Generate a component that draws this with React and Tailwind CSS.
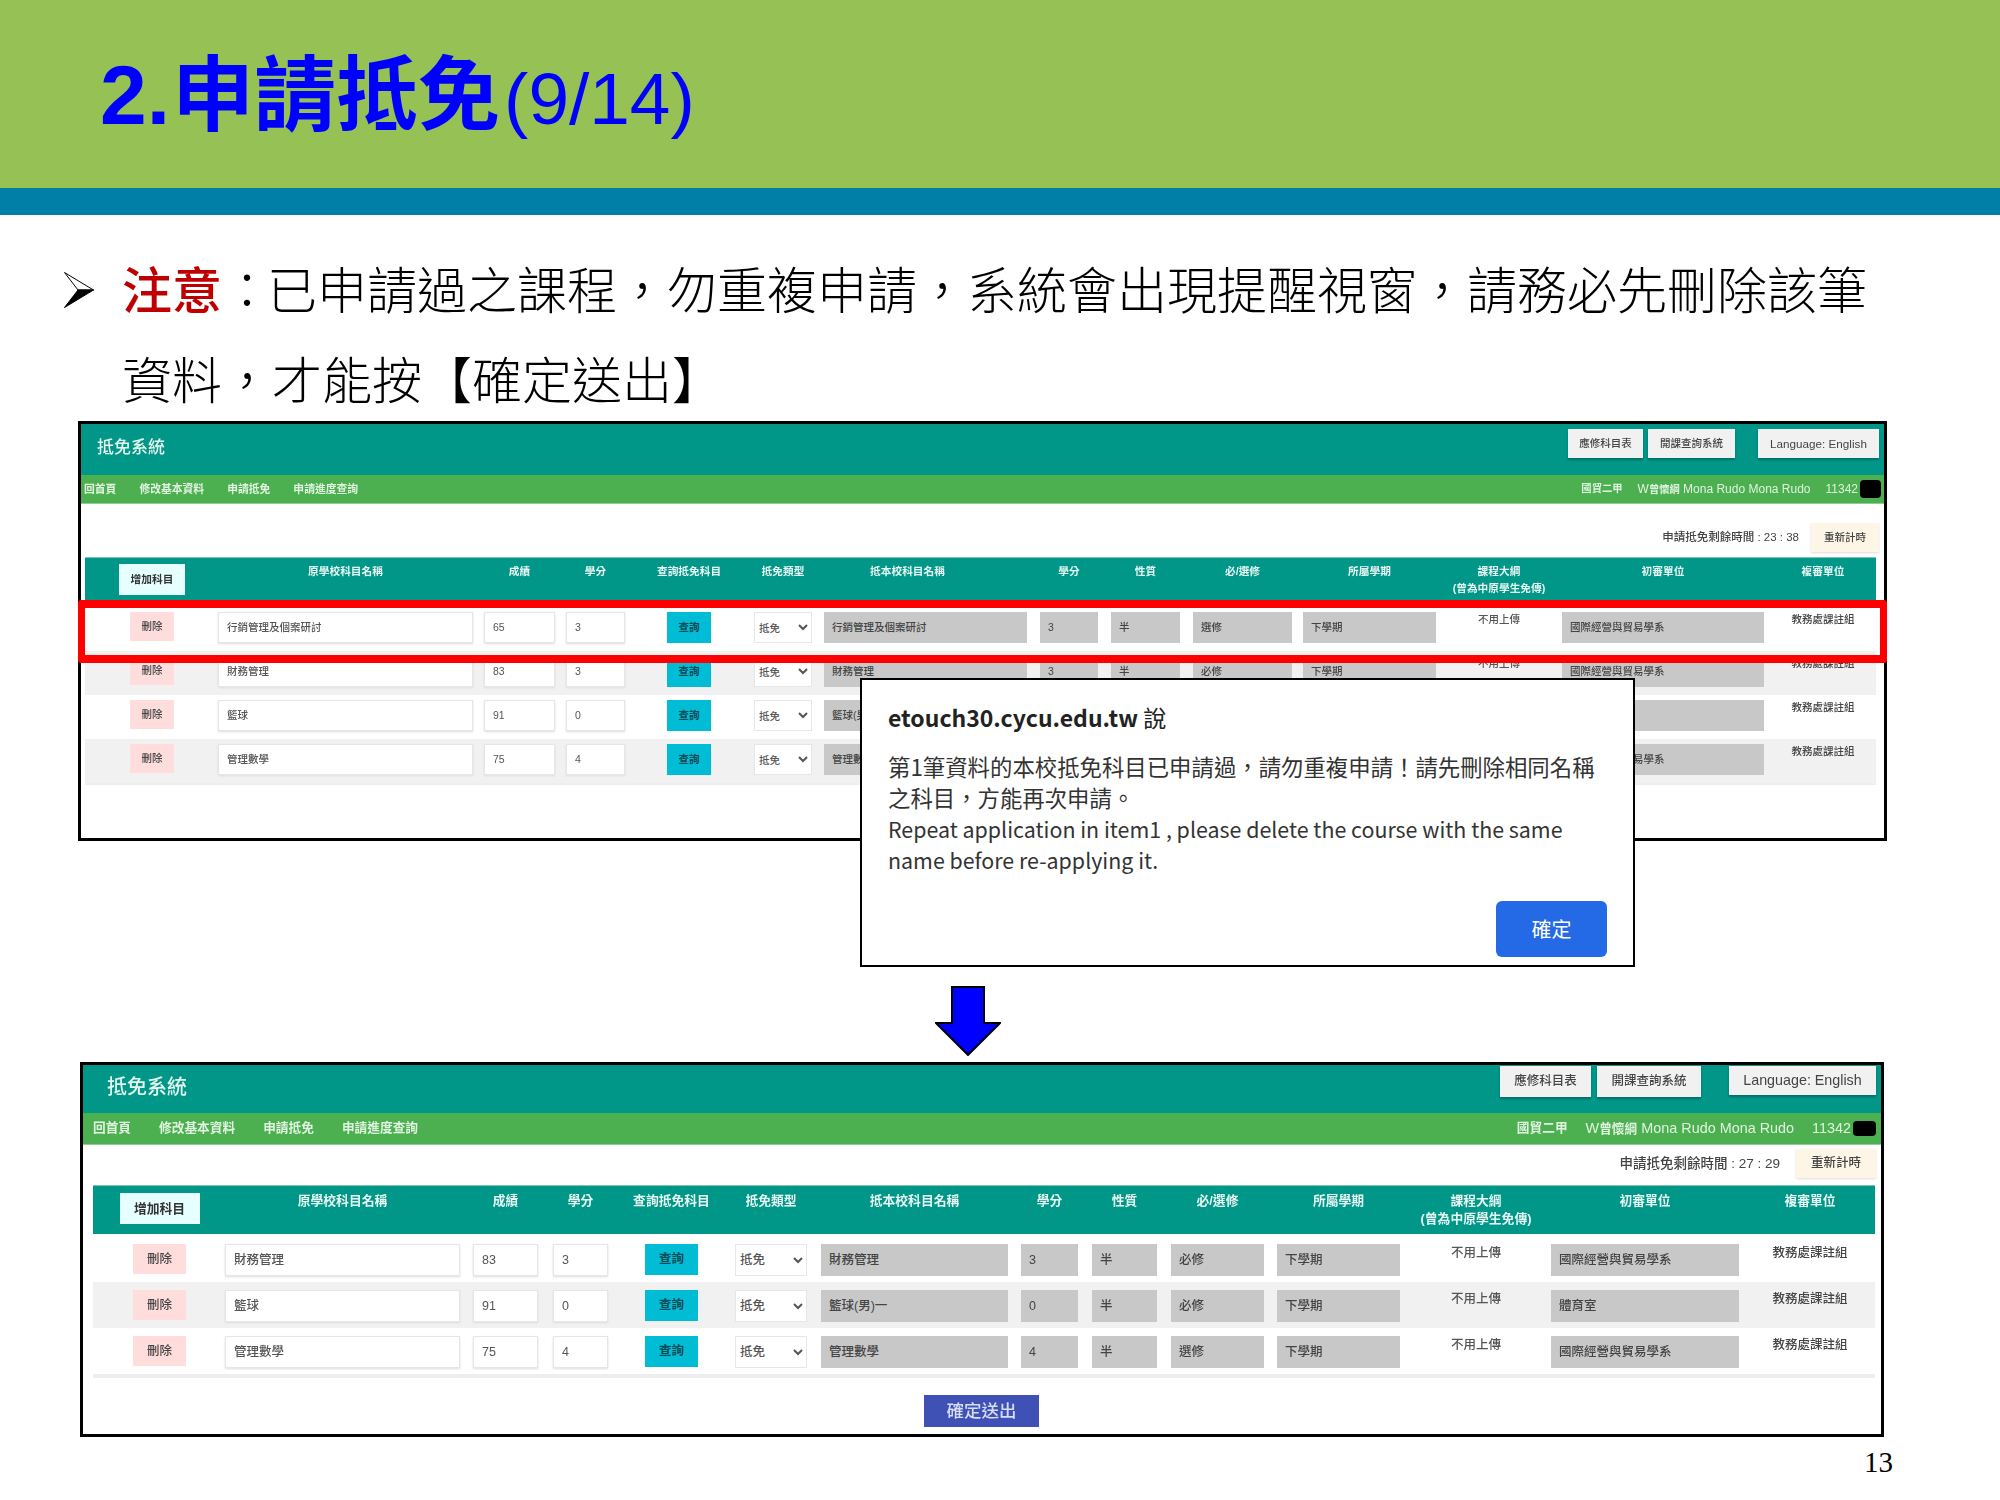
import React from "react";

const CJK = "font-['Noto_Sans_CJK_TC','Liberation_Sans',sans-serif]";
const SHOT_FONT = "font-['Liberation_Sans','Noto_Sans_CJK_TC',sans-serif]";

const HEAD_LABELS = [
  "",
  "原學校科目名稱",
  "成績",
  "學分",
  "查詢抵免科目",
  "抵免類型",
  "抵本校科目名稱",
  "學分",
  "性質",
  "必/選修",
  "所屬學期",
  "課程大綱",
  "初審單位",
  "複審單位",
];

const DEPT = "國際經營與貿易學系";

const rowsTop = [
  { name: "行銷管理及個案研討", score: "65", credit: "3", kind: "選修", dept: DEPT, target: "行銷管理及個案研討" },
  { name: "財務管理", score: "83", credit: "3", kind: "必修", dept: DEPT, target: "財務管理" },
  { name: "籃球", score: "91", credit: "0", kind: "必修", dept: "體育室", target: "籃球(男)一" },
  { name: "管理數學", score: "75", credit: "4", kind: "選修", dept: DEPT, target: "管理數學" },
];

const shotTop = {
  outer: "w-[1809px] h-[420px]",
  bar: "h-[51px]",
  title: "pl-4 text-[17px] -mt-1",
  topBtns: "pt-[5px] pr-[5px]",
  btnH: "h-[29px] text-[10.5px]",
  btnA: "w-[75px]",
  btnB: "w-[87px] ml-[5px]",
  btnC: "w-[121px] ml-[23px] text-[11.7px]",
  nav: "h-[29px] text-[10.8px] pl-[3px] pr-[3px]",
  navGap: "gap-[23px]",
  navRight: "gap-[15px] text-[12px]",
  navCjk: "text-[10.3px]",
  blob: "w-[21px] h-[18px] ml-[2px]",
  timerRow: "h-[53px] pt-[19px] pr-[5px] text-[11.5px]",
  timerGap: "mr-3",
  reset: "w-[68px] h-[29px] text-[10.5px]",
  timer: "申請抵免剩餘時間 : 23 : 38",
  table: "ml-1 w-[1791px]",
  head: "h-[43px] text-[10.7px] leading-[17px]",
  headPad: "pt-[5px]",
  addBtn: "w-[66px] h-[31px] mt-[6px]",
  body: "pt-[7px] border-b-2",
  row: "h-[44px] pt-[5px] text-[10.5px]",
  field: "h-[31px]",
  del: "h-[29px]",
  query: "h-[31px]",
  note: "-mt-[3px]",
  targetHead: "pr-9",
  cols: [
    "ml-[45px] w-[44px]",
    "ml-[44px] w-[255px]",
    "ml-[11px] w-[71px]",
    "ml-[11px] w-[59px]",
    "ml-[42px] w-[44px]",
    "ml-[43px] w-[58px]",
    "ml-[12px] w-[203px]",
    "ml-[13px] w-[58px]",
    "ml-[13px] w-[69px]",
    "ml-[13px] w-[99px]",
    "ml-[11px] w-[133px]",
    "ml-[9px] w-[108px]",
    "ml-[9px] w-[202px]",
    "ml-[16px] w-[86px]",
  ],
  rows: rowsTop,
};

const shotBottom = {
  outer: "w-[1804px] h-[375px]",
  bar: "h-[48px]",
  title: "pl-6 text-[20px] -mt-1",
  topBtns: "pt-px pr-[5px]",
  btnH: "h-[31px] text-[12.5px]",
  btnA: "w-[91px]",
  btnB: "w-[104px] ml-[6px]",
  btnC: "w-[147px] ml-[28px] text-[14.3px]",
  nav: "h-[32px] text-[12.7px] pl-[10px] pr-[5px]",
  navGap: "gap-[28px]",
  navRight: "gap-[18px] text-[14.4px]",
  navCjk: "text-[12.7px]",
  blob: "w-[23px] h-[15px] ml-[2px]",
  timerRow: "h-[40px] pt-1 pr-[5px] text-[13.5px]",
  timerGap: "mr-4",
  reset: "w-[80px] h-[29px] text-[12.5px]",
  timer: "申請抵免剩餘時間 : 27 : 29",
  table: "ml-[10px] w-[1782px]",
  head: "h-[49px] text-[12.8px] leading-[18px]",
  headPad: "pt-[6px]",
  addBtn: "w-[80px] h-[31px] mt-[7px]",
  body: "pt-[2px] border-b-4",
  row: "h-[46px] pt-2 text-[12.5px]",
  field: "h-[32px]",
  del: "h-[30px]",
  query: "h-[31px]",
  note: "-mt-px",
  targetHead: "",
  cols: [
    "ml-[40px] w-[53px]",
    "ml-[39px] w-[235px]",
    "ml-[13px] w-[65px]",
    "ml-[15px] w-[55px]",
    "ml-[37px] w-[53px]",
    "ml-[37px] w-[72px]",
    "ml-[14px] w-[187px]",
    "ml-[13px] w-[57px]",
    "ml-[14px] w-[65px]",
    "ml-[14px] w-[93px]",
    "ml-[13px] w-[123px]",
    "ml-[20px] w-[112px]",
    "ml-[19px] w-[188px]",
    "ml-[26px] w-[90px]",
  ],
  rows: rowsTop.slice(1),
};

const Field = ({ children, className }) => (
  <div className={`flex items-center px-2 overflow-hidden whitespace-nowrap ${className}`}>{children}</div>
);

const Row = ({ shot, item, index }) => {
  const c = shot.cols;
  const fieldInput = `${shot.field} bg-white border border-[#e6e6e6] shadow-[0_1px_2px_#ddd] text-[#555] font-medium`;
  const fieldGray = `${shot.field} bg-[#c8c8c8] text-[#444] font-medium`;
  return (
    <div className={`flex items-start ${shot.row} ${index % 2 === 1 ? "bg-[#f1f1f1]" : "bg-white"}`}>
      <button className={`shrink-0 ${c[0]} ${shot.del} bg-[#ffdddd] text-[#444] font-medium`}>刪除</button>
      <Field className={`shrink-0 ${c[1]} ${fieldInput}`}>{item.name}</Field>
      <Field className={`shrink-0 ${c[2]} ${fieldInput}`}>{item.score}</Field>
      <Field className={`shrink-0 ${c[3]} ${fieldInput}`}>{item.credit}</Field>
      <button className={`shrink-0 ${c[4]} ${shot.query} bg-[#00bcd4] text-[#0a4a58] font-bold`}>查詢</button>
      <select
        defaultValue="抵免"
        className={`shrink-0 ${c[5]} ${shot.field} bg-white border border-[#e6e6e6] text-[#555] font-medium`}
      >
        <option>抵免</option>
      </select>
      <Field className={`shrink-0 ${c[6]} ${fieldGray}`}>{item.target}</Field>
      <Field className={`shrink-0 ${c[7]} ${fieldGray}`}>{item.credit}</Field>
      <Field className={`shrink-0 ${c[8]} ${fieldGray}`}>半</Field>
      <Field className={`shrink-0 ${c[9]} ${fieldGray}`}>{item.kind}</Field>
      <Field className={`shrink-0 ${c[10]} ${fieldGray}`}>下學期</Field>
      <div className={`shrink-0 ${c[11]} ${shot.note} text-center text-[#555] font-medium leading-[20px]`}>不用上傳</div>
      <Field className={`shrink-0 ${c[12]} ${fieldGray}`}>{item.dept}</Field>
      <div className={`shrink-0 ${c[13]} ${shot.note} text-center text-[#444] font-medium whitespace-nowrap leading-[20px]`}>教務處課註組</div>
    </div>
  );
};

const Shot = ({ shot, footer }) => (
  <div className={`border-[3px] border-black bg-white overflow-hidden ${shot.outer}`}>
    <div className={`blur-[0.5px] ${SHOT_FONT}`}>
      {/* top bar */}
      <div className={`flex justify-between bg-[#009688] ${shot.bar}`}>
        <div className={`self-center text-[#e4f5ee] font-medium ${shot.title}`}>抵免系統</div>
        <div className={`flex items-start ${shot.topBtns}`}>
          <button className={`${shot.btnH} ${shot.btnA} bg-[#f1f1f1] text-[#444] font-medium shadow-[0_2px_2px_rgba(0,0,0,.25)]`}>應修科目表</button>
          <button className={`${shot.btnH} ${shot.btnB} bg-[#f1f1f1] text-[#444] font-medium shadow-[0_2px_2px_rgba(0,0,0,.25)]`}>開課查詢系統</button>
          <button className={`${shot.btnC} h-[29px] bg-[#f1f1f1] text-[#444] shadow-[0_2px_2px_rgba(0,0,0,.25)]`}>Language: English</button>
        </div>
      </div>
      {/* nav */}
      <div className={`flex items-center justify-between bg-[#4caf50] text-[#e0f3e0] font-bold border-b border-[#8bcf8e] ${shot.nav}`}>
        <div className={`flex ${shot.navGap}`}>
          <span>回首頁</span>
          <span>修改基本資料</span>
          <span>申請抵免</span>
          <span>申請進度查詢</span>
        </div>
        <div className={`flex items-center font-normal ${shot.navRight}`}>
          <span className={`font-bold ${shot.navCjk}`}>國貿二甲</span>
          <span>W<span className={`font-bold ${shot.navCjk}`}>曾懷綱</span> Mona Rudo Mona Rudo</span>
          <span className="flex items-center">
            11342
            <span className={`inline-block bg-black rounded ${shot.blob}`} />
          </span>
        </div>
      </div>
      {/* timer */}
      <div className={`flex justify-end items-start text-[#444] font-medium ${shot.timerRow}`}>
        <span className={`self-center -mt-[5px] ${shot.timerGap}`}>{shot.timer}</span>
        <button className={`${shot.reset} bg-[#fdf5e6] text-[#444] font-medium shadow-[0_1px_2px_#ddd]`}>重新計時</button>
      </div>
      {/* table */}
      <div className={shot.table}>
        <div className={`flex items-start bg-[#009688] border-t border-[#7fc4bb] text-[#e6f6f2] font-bold ${shot.head}`}>
          <div className={`shrink-0 flex justify-center ${shot.cols[0]}`}>
            <button className={`shrink-0 ${shot.addBtn} bg-[#e6ffff] text-[#333] font-bold`}>增加科目</button>
          </div>
          {HEAD_LABELS.slice(1).map((label, i) => (
            <div
              key={i}
              className={`shrink-0 flex justify-center text-center whitespace-nowrap ${shot.headPad} ${shot.cols[i + 1]} ${i === 5 ? shot.targetHead : ""}`}
            >
              <div className="shrink-0">
                {label}
                {i === 10 && (
                  <>
                    <br />
                    (曾為中原學生免傳)
                  </>
                )}
              </div>
            </div>
          ))}
        </div>
        <div className={`${shot.body} border-[#eeeeee]`}>
          {shot.rows.map((item, i) => (
            <Row key={i} shot={shot} item={item} index={i} />
          ))}
        </div>
      </div>
      {footer}
    </div>
  </div>
);

const AlertBox = () => (
  <div className={`absolute left-[782px] top-[257px] w-[775px] h-[289px] border-2 border-black bg-white px-[26px] pt-[21px] ${CJK}`}>
    <div className="text-[23px] leading-[32px] font-bold text-[#222]">
      etouch30.cycu.edu.tw <span className="font-normal">說</span>
    </div>
    <div className="mt-[18px] text-[22.4px] leading-[31px] text-[#333] whitespace-nowrap">
      第1筆資料的本校抵免科目已申請過，請勿重複申請！請先刪除相同名稱
      <br />
      之科目，方能再次申請。
      <br />
      <span className="text-[21.4px]">Repeat application in item1 , please delete the course with the same</span>
      <br />
      <span className="text-[21.4px]">name before re-applying it.</span>
    </div>
    <div className="mt-[26px] flex justify-end">
      <button className="w-[111px] h-[56px] rounded-md bg-[#2469e5] text-white text-[20px]">確定</button>
    </div>
  </div>
);

const App = () => (
  <div className="w-[2000px] h-[1500px] bg-white overflow-hidden">
    {/* slide header */}
    <div className="h-[188px] bg-[#95c155] pl-[100px] pt-[39px]">
      <div className={`flex items-baseline text-[#0000ff] leading-[100px] ${CJK}`}>
        <span className="text-[84px] font-bold font-['Liberation_Sans',sans-serif]">2.</span>
        <span className="ml-[2px] text-[82px] font-bold">申請抵免</span>
        <span className="ml-[4px] text-[73px] font-['Liberation_Sans',sans-serif]">(9/14)</span>
      </div>
    </div>
    <div className="h-[27px] bg-[#0080a6]" />

    {/* notice */}
    <div className="flex mt-[27px] pl-[64px]">
      <svg viewBox="0 0 30 36" className="w-[30px] h-[36px] mt-[30px] shrink-0">
        <path d="M0.5 0.5 L29.5 18 L14 18 Z" fill="#fff" stroke="#000" strokeWidth="1" />
        <path d="M0.5 35.5 L29.5 18 L14 18 Z" fill="#000" stroke="#000" strokeWidth="1" />
      </svg>
      <div className={`ml-[28px] w-[1766px] text-[50px] leading-[90px] font-light text-black ${CJK}`}>
        <span className="text-[#c00000] font-medium">注意</span>
        <span className="tracking-[-5px]">：</span>
        已申請過之課程，勿重複申請，系統會出現提醒視窗，請務必先刪除該筆資料，才能按【確定送出】
      </div>
    </div>

    {/* first capture */}
    <div className="relative -mt-px ml-[78px] w-[1809px] h-[420px]">
      <Shot shot={shotTop} />
      <div className="absolute left-0 top-[179px] w-[1809px] h-[63px] border-x-[7px] border-y-[8px] border-[#ff0000] rounded-[3px]" />
      <AlertBox />
    </div>

    {/* arrow */}
    <svg viewBox="0 0 66 70" className="block mt-[145px] ml-[935px] w-[66px] h-[70px]">
      <path d="M17 1 H49 V37 H65 L33 69 L1 37 H17 Z" fill="#0000ff" stroke="#000" strokeWidth="2" />
    </svg>

    {/* second capture */}
    <div className="mt-[6px] ml-[80px]">
      <Shot
        shot={shotBottom}
        footer={
          <button className="block mt-[17px] ml-[841px] w-[115px] h-[32px] bg-[#3f51b5] text-[#d5ddf5] text-[17.5px] font-medium">
            確定送出
          </button>
        }
      />
    </div>

    <div className="flex justify-end mt-[9px] pr-[107px] text-[29px] leading-[32px] font-['Liberation_Serif',serif]">
      13
    </div>
  </div>
);

export default App;
